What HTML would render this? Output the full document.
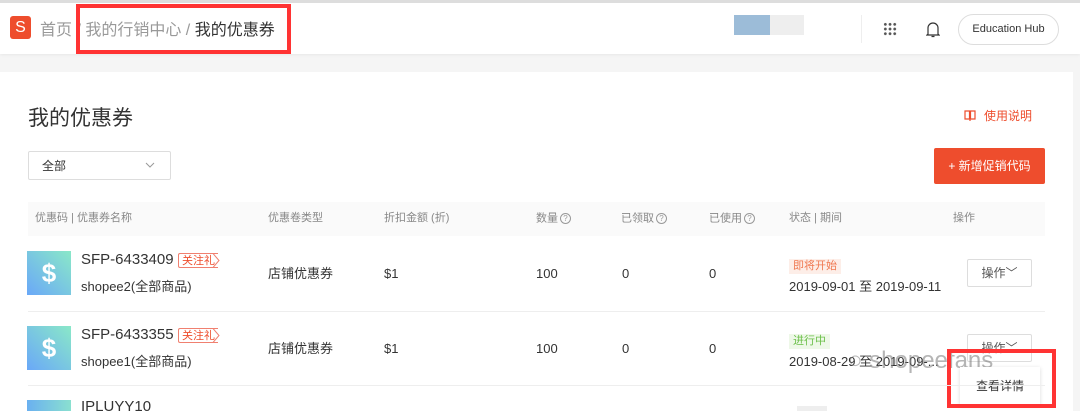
<!DOCTYPE html>
<html><head><meta charset="utf-8"><style>
*{margin:0;padding:0;box-sizing:border-box}
html,body{width:1080px;height:411px;overflow:hidden}
body{background:#f5f5f5;font-family:"Liberation Sans","Noto Sans CJK SC",sans-serif;color:#333;position:relative;line-height:1}
.a{position:absolute;white-space:nowrap}
.top{left:0;top:0;width:1080px;height:54px;background:#fff;border-top:3px solid #ddd;box-shadow:0 1px 3px rgba(0,0,0,.06)}
.card{left:0;top:72px;width:1073px;height:339px;background:#fff}
.th{top:202px;left:28px;width:1017px;height:34px;background:#fafafa}
.thx{font-size:11px;color:#888;top:213px}
.q{display:inline-block;width:11px;height:11px;border:1px solid #999;border-radius:50%;font-size:8px;line-height:9px;text-align:center;color:#999;vertical-align:middle;margin-left:2px}
.ic{width:44px;height:44px;background:linear-gradient(45deg,#6aa8f8,#8ae8c8);color:#fff;font-size:26px;font-weight:bold;text-align:center;line-height:44px}
.code{font-size:15px;color:#333}
.tag{font-size:11px;color:#ee4d2d;border:1px solid #f08070;border-right:none;padding:1px 3px;line-height:12px;height:15px;border-radius:2px 0 0 2px}
.t13{font-size:13px;color:#333}
.btn{border:1px solid #ddd;border-radius:2px;background:#fff;font-size:12px;color:#555;text-align:center}
.div{left:28px;width:1017px;height:1px;background:#eee}
</style></head><body>
<div class="a top"></div>
<div class="a" style="left:10px;top:16px;width:21px;height:23px;background:#ee4d2d;border-radius:3px;color:#fff;font-size:16px;text-align:center;line-height:24px">S</div>
<div class="a" style="left:40px;top:23px;font-size:16px;color:#999">首页 / 我的行销中心 / <span style="color:#333">我的优惠券</span></div>
<div class="a" style="left:76px;top:4px;width:215px;height:50px;border:4px solid #f33"></div>
<div class="a" style="left:734px;top:15px;width:36px;height:20px;background:#9cbcd8"></div>
<div class="a" style="left:770px;top:15px;width:34px;height:20px;background:#eee"></div>
<div class="a" style="left:861px;top:15px;width:1px;height:28px;background:#eee"></div>
<div class="a" style="left:883px;top:22px;width:14px;height:14px;background:radial-gradient(circle,#555 1.2px,transparent 1.6px) 0 0/4.7px 4.7px"></div>
<svg class="a" style="left:926px;top:21px" width="14" height="17" viewBox="0 0 14 17"><path d="M2 13V7a5 5 0 0 1 10 0v6l1 1H1z M5.5 15.5h3" fill="none" stroke="#333" stroke-width="1.2"/></svg>
<div class="a" style="left:958px;top:14px;width:101px;height:31px;border:1px solid #ddd;border-radius:16px;font-size:11px;color:#333;text-align:center;line-height:29px">Education Hub</div>
<div class="a card"></div>
<div class="a" style="left:28px;top:108px;font-size:21px;color:#333">我的优惠券</div>
<svg class="a" style="left:964px;top:110px" width="12" height="11" viewBox="0 0 12 11"><path d="M1 1h4.5v8H1z M6.5 1H11v8H6.5z M6 9v2" fill="none" stroke="#ee4d2d" stroke-width="1.2"/></svg>
<div class="a" style="left:984px;top:110px;font-size:12px;color:#ee4d2d">使用说明</div>
<div class="a" style="left:28px;top:151px;width:143px;height:29px;border:1px solid #ddd;border-radius:2px"></div>
<div class="a" style="left:42px;top:160px;font-size:12px">全部</div>
<svg class="a" style="left:145px;top:162px" width="10" height="6" viewBox="0 0 10 6"><path d="M1 1l4 4 4-4" fill="none" stroke="#999" stroke-width="1"/></svg>
<div class="a" style="left:934px;top:148px;width:111px;height:36px;background:#ee4d2d;border-radius:2px;color:#fff;font-size:12px;text-align:center;line-height:36px">+ 新增促销代码</div>
<div class="a th"></div>
<div class="a thx" style="left:35px">优惠码 | 优惠券名称</div>
<div class="a thx" style="left:268px">优惠卷类型</div>
<div class="a thx" style="left:384px">折扣金额 (折)</div>
<div class="a thx" style="left:536px">数量<span class="q">?</span></div>
<div class="a thx" style="left:621px">已领取<span class="q">?</span></div>
<div class="a thx" style="left:709px">已使用<span class="q">?</span></div>
<div class="a thx" style="left:789px">状态 | 期间</div>
<div class="a thx" style="left:953px">操作</div>

<div class="a ic" style="left:27px;top:251px">$</div>
<div class="a code" style="left:81px;top:252px">SFP-6433409</div>
<div class="a tag" style="left:178px;top:253px">关注礼</div>
<svg class="a" style="left:212px;top:253px" width="8" height="15" viewBox="0 0 8 15"><path d="M0 .5h1l6 7-6 7H0" fill="none" stroke="#f08070"/></svg>
<div class="a t13" style="left:81px;top:280px">shopee2(全部商品)</div>
<div class="a t13" style="left:268px;top:267px">店铺优惠券</div>
<div class="a t13" style="left:384px;top:267px">$1</div>
<div class="a t13" style="left:536px;top:267px">100</div>
<div class="a t13" style="left:622px;top:267px">0</div>
<div class="a t13" style="left:709px;top:267px">0</div>
<div class="a" style="left:789px;top:259px;font-size:11px;color:#f07850;background:#fdeee8;padding:2px 4px">即将开始</div>
<div class="a t13" style="left:789px;top:280px">2019-09-01 至 2019-09-11</div>
<div class="a btn" style="left:967px;top:259px;width:65px;height:28px;line-height:26px">操作﹀</div>
<div class="a div" style="top:311px"></div>

<div class="a ic" style="left:27px;top:326px">$</div>
<div class="a code" style="left:81px;top:327px">SFP-6433355</div>
<div class="a tag" style="left:178px;top:328px">关注礼</div>
<svg class="a" style="left:212px;top:328px" width="8" height="15" viewBox="0 0 8 15"><path d="M0 .5h1l6 7-6 7H0" fill="none" stroke="#f08070"/></svg>
<div class="a t13" style="left:81px;top:355px">shopee1(全部商品)</div>
<div class="a t13" style="left:268px;top:342px">店铺优惠券</div>
<div class="a t13" style="left:384px;top:342px">$1</div>
<div class="a t13" style="left:536px;top:342px">100</div>
<div class="a t13" style="left:622px;top:342px">0</div>
<div class="a t13" style="left:709px;top:342px">0</div>
<div class="a" style="left:789px;top:334px;font-size:11px;color:#6cc04a;background:#eef8e8;padding:2px 4px">进行中</div>
<div class="a t13" style="left:789px;top:355px">2019-08-29 至 2019-09-...</div>
<div class="a btn" style="left:967px;top:334px;width:65px;height:28px;line-height:26px">操作﹀</div>
<div class="a" style="left:848px;top:349px;font-size:24px;color:rgba(120,120,120,.55)">○ shopeefans</div>
<div class="a" style="left:960px;top:367px;width:80px;height:38px;background:#fff;box-shadow:0 1px 4px rgba(0,0,0,.15);font-size:12px;text-align:center;line-height:38px;color:#333">查看详情</div>
<div class="a" style="left:947px;top:349px;width:109px;height:59px;border:4px solid #f33"></div>
<div class="a div" style="top:385px"></div>
<div class="a" style="left:27px;top:400px;width:44px;height:11px;background:linear-gradient(90deg,#6ab0f0,#8ae0d0)"></div>
<div class="a code" style="left:81px;top:399px;height:12px;overflow:hidden">IPLUYY10</div>
<div class="a" style="left:797px;top:406px;width:30px;height:5px;background:#eee"></div>
</body></html>
